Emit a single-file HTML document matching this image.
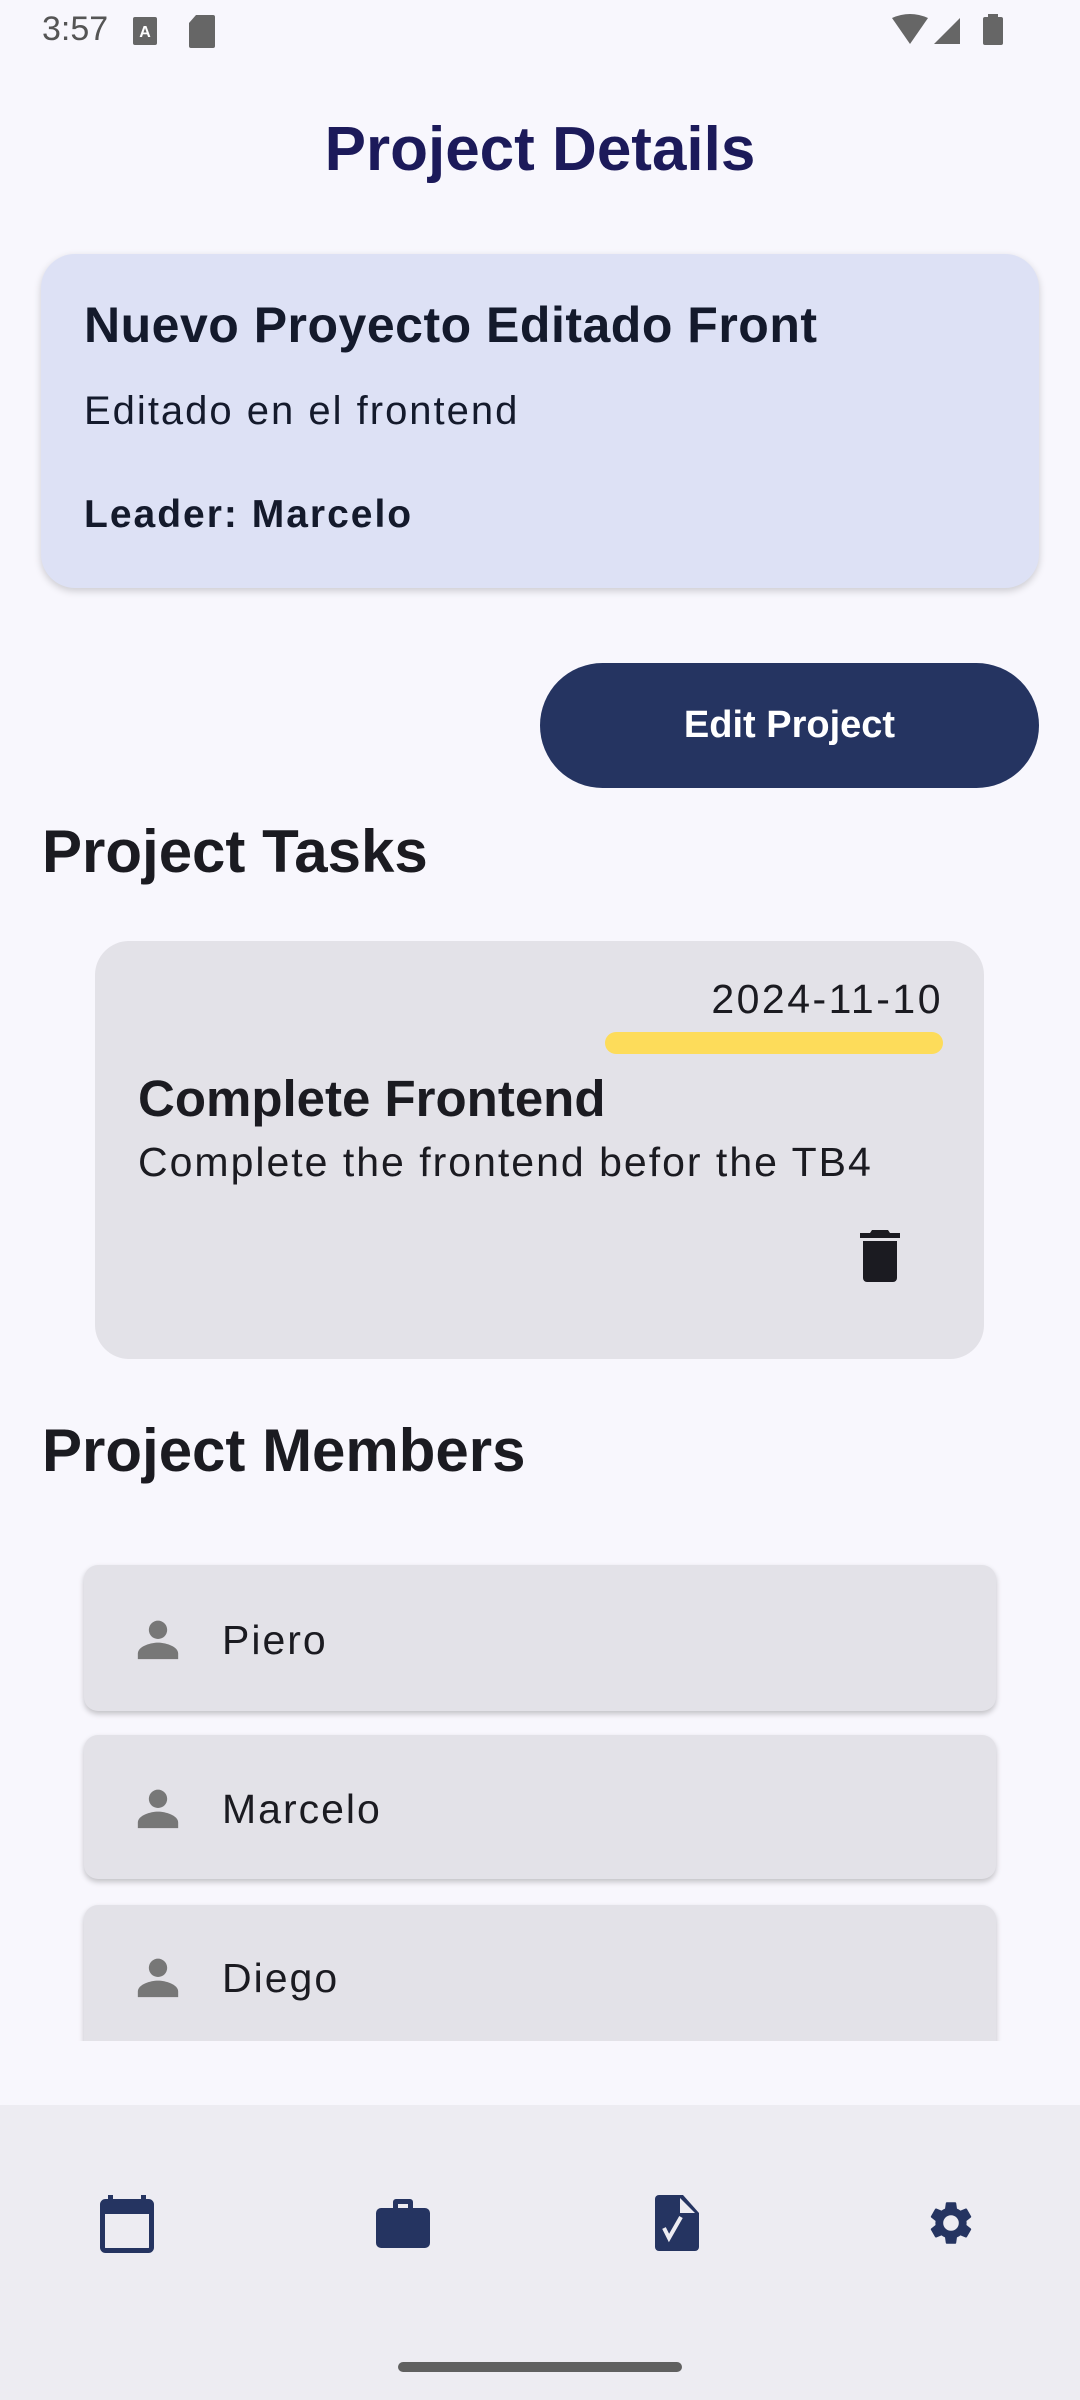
<!DOCTYPE html>
<html><head><meta charset="utf-8"><style>
*{margin:0;padding:0;box-sizing:border-box}
body{width:1080px;height:2400px;background:#f8f7fd;font-family:"Liberation Sans",sans-serif;position:relative;overflow:hidden;color:#1b1b21}
.a{position:absolute}
.t{white-space:nowrap}
</style></head><body>
<div class="a t" style="left:42px;top:10px;font-size:34px;color:#555">3:57</div>
<svg class="a" style="left:132px;top:16px" width="26" height="30" viewBox="0 0 26 30"><rect x="1" y="1" width="24" height="28" rx="2" fill="#666"/><text x="13" y="21" font-size="16" font-family="Liberation Sans" fill="#fff" text-anchor="middle" font-weight="bold">A</text></svg>
<svg class="a" style="left:188px;top:14px" width="28" height="34" viewBox="0 0 28 34"><path d="M8 1h17a2 2 0 0 1 2 2v29a2 2 0 0 1-2 2H3a2 2 0 0 1-2-2V9z" fill="#666"/></svg>
<svg class="a" style="left:890px;top:14px" width="120" height="34" viewBox="0 0 120 34"><path d="M2 4Q20-4 38 4L20 30z" fill="#666"/><path d="M44 30L70 4v26z" fill="#666"/><rect x="93" y="3" width="20" height="28" rx="2" fill="#666"/><rect x="98" y="0" width="10" height="4" fill="#666"/></svg>

<div class="a t" style="left:0;width:1080px;text-align:center;top:114px;font-size:62px;font-weight:bold;color:#1c1a5a">Project Details</div>

<div class="a" style="left:41px;top:254px;width:998px;height:334px;background:#dde1f5;border-radius:34px;box-shadow:0 3px 8px rgba(0,0,0,.18)"></div>
<div class="a t" style="left:84px;top:296px;font-size:50px;font-weight:bold;color:#141a2c;letter-spacing:0.5px">Nuevo Proyecto Editado Front</div>
<div class="a t" style="left:84px;top:389px;font-size:40px;color:#141a2c;letter-spacing:2px">Editado en el frontend</div>
<div class="a t" style="left:84px;top:493px;font-size:39px;font-weight:bold;color:#141a2c;letter-spacing:2px">Leader: Marcelo</div>

<div class="a t" style="left:540px;top:663px;width:499px;height:125px;background:#253461;border-radius:63px;color:#fff;font-size:38px;font-weight:bold;text-align:center;line-height:125px">Edit Project</div>

<div class="a t" style="left:42px;top:817px;font-size:60px;font-weight:bold">Project Tasks</div>

<div class="a" style="left:95px;top:941px;width:889px;height:418px;background:#e3e2e8;border-radius:34px"></div>
<div class="a t" style="right:137px;top:976px;font-size:41px;letter-spacing:2.5px">2024-11-10</div>
<div class="a" style="left:605px;top:1032px;width:338px;height:22px;background:#fddc5a;border-radius:11px"></div>
<div class="a t" style="left:138px;top:1069px;font-size:51px;font-weight:bold">Complete Frontend</div>
<div class="a t" style="left:138px;top:1139px;font-size:41px;letter-spacing:2px">Complete the frontend befor the TB4</div>
<svg class="a" style="left:860px;top:1230px" width="40" height="52" viewBox="0 0 40 52"><path d="M12 0h16l2 3h10v5H0V3h10z" fill="#1b1b21"/><path d="M3 11h34v37a4 4 0 0 1-4 4H7a4 4 0 0 1-4-4z" fill="#1b1b21"/></svg>

<div class="a t" style="left:42px;top:1416px;font-size:60px;font-weight:bold">Project Members</div>

<div class="a" style="left:0;top:1540px;width:1080px;height:501px;overflow:hidden">
 <div class="a" style="left:84px;top:25px;width:912px;height:146px;background:#e3e2e8;border-radius:14px;box-shadow:0 3px 6px rgba(0,0,0,.22)"></div>
 <div class="a" style="left:84px;top:195px;width:912px;height:144px;background:#e3e2e8;border-radius:14px;box-shadow:0 3px 6px rgba(0,0,0,.22)"></div>
 <div class="a" style="left:84px;top:365px;width:912px;height:160px;background:#e3e2e8;border-radius:14px;box-shadow:0 3px 6px rgba(0,0,0,.22)"></div>
 <svg class="a" style="left:135px;top:77px" width="46" height="44" viewBox="0 0 24 24"><circle cx="12" cy="7" r="5" fill="#777"/><path d="M1 23v-3c0-4 7-6 11-6s11 2 11 6v3z" fill="#777"/></svg>
 <svg class="a" style="left:135px;top:246px" width="46" height="44" viewBox="0 0 24 24"><circle cx="12" cy="7" r="5" fill="#777"/><path d="M1 23v-3c0-4 7-6 11-6s11 2 11 6v3z" fill="#777"/></svg>
 <svg class="a" style="left:135px;top:415px" width="46" height="44" viewBox="0 0 24 24"><circle cx="12" cy="7" r="5" fill="#777"/><path d="M1 23v-3c0-4 7-6 11-6s11 2 11 6v3z" fill="#777"/></svg>
 <div class="a t" style="left:222px;top:77px;font-size:41px;letter-spacing:2px">Piero</div>
 <div class="a t" style="left:222px;top:246px;font-size:41px;letter-spacing:2px">Marcelo</div>
 <div class="a t" style="left:222px;top:415px;font-size:41px;letter-spacing:2px">Diego</div>
</div>

<div class="a" style="left:0;top:2105px;width:1080px;height:295px;background:#edecf2"></div>
<svg class="a" style="left:100px;top:2195px" width="54" height="58" viewBox="0 0 54 58"><rect x="8" y="0" width="5" height="8" fill="#253461"/><rect x="41" y="0" width="5" height="8" fill="#253461"/><rect x="2.5" y="6.5" width="49" height="49" rx="3" fill="none" stroke="#253461" stroke-width="5"/><rect x="2" y="6" width="50" height="13" fill="#253461"/></svg>
<svg class="a" style="left:376px;top:2198px" width="54" height="50" viewBox="0 0 54 50"><path d="M17 10V4a3 3 0 0 1 3-3h14a3 3 0 0 1 3 3v6h-5V6H22v4z" fill="#253461"/><rect x="0" y="10" width="54" height="40" rx="5" fill="#253461"/></svg>
<svg class="a" style="left:655px;top:2195px" width="44" height="56" viewBox="0 0 44 56"><path d="M4 0h24l16 18v34a4 4 0 0 1-4 4H4a4 4 0 0 1-4-4V4a4 4 0 0 1 4-4z" fill="#253461"/><path d="M25 3v15h15z" fill="#edecf2"/><path d="M9 33l5 10 12-21" fill="none" stroke="#edecf2" stroke-width="4"/></svg>
<svg class="a" style="left:925px;top:2196px" width="52" height="54" viewBox="0 0 24 24"><path d="M19.14 12.94c.04-.3.06-.61.06-.94s-.02-.64-.07-.94l2.030-1.58a.49.49 0 0 0 .12-.61l-1.92-3.32a.49.49 0 0 0-.59-.22l-2.39.96c-.5-.38-1.03-.7-1.620-.94l-.36-2.54a.48.48 0 0 0-.48-.41h-3.84c-.24 0-.43.17-.47.41l-.36 2.54c-.59.24-1.13.57-1.62.94l-2.39-.96a.49.49 0 0 0-.59.22L2.74 8.87a.47.47 0 0 0 .12.61l2.03 1.58c-.05.3-.09.63-.09.94s.02.64.07.94l-2.03 1.58a.49.49 0 0 0-.12.61l1.92 3.32c.12.22.37.29.59.22l2.39-.96c.5.38 1.03.7 1.62.94l.36 2.54c.05.24.24.41.48.41h3.84c.24 0 .44-.17.47-.41l.36-2.54c.59-.24 1.13-.56 1.62-.94l2.39.96c.22.08.47 0 .59-.22l1.92-3.32a.47.47 0 0 0-.12-.61zM12 15.6A3.6 3.6 0 1 1 12 8.4a3.6 3.6 0 0 1 0 7.2z" fill="#253461"/></svg>
<div class="a" style="left:398px;top:2362px;width:284px;height:10px;border-radius:5px;background:#606060"></div>
</body></html>
